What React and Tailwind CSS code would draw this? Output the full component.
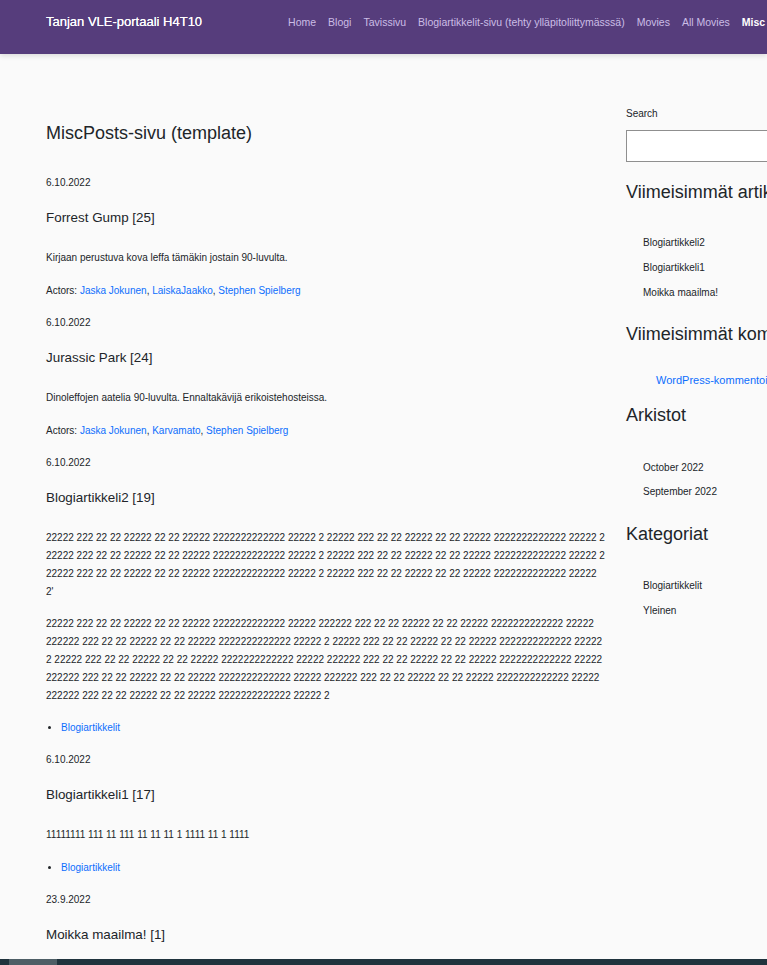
import React from "react";

const N = "2222222222222";
const A1 = `22222 222 22 22 22222 22 22 22222 ${N} 22222`;
const L1 = `${A1} 2 ${A1} 2`;
const L3 = `${A1} 2 ${A1}`;

const P2 = [
  `${A1} 2${A1}`,
  `2${A1} 2 ${A1}`,
  `2 ${A1} 2${A1}`,
  `2${A1} 2${A1}`,
  `2${A1} 2`,
];

function A({ children }) {
  return <a href="#" className="text-[#0d6efd]">{children}</a>;
}

function Post({ date, title, children }) {
  return (
    <article className="mb-[14px]">
      <p className="text-[10px] leading-[18px] mb-[18px]">{date}</p>
      <h2 className="text-[13.4px] leading-[16px] mb-[23px]">{title}</h2>
      <div className="flex flex-col gap-[15px] text-[10px] leading-[18px]">{children}</div>
    </article>
  );
}

function CatList({ className = "" }) {
  return (
    <ul className={`list-disc pl-[15px] text-[10px] leading-[18px] ${className}`}>
      <li><A>Blogiartikkelit</A></li>
    </ul>
  );
}

export default function App() {
  const nav = ["Home", "Blogi", "Tavissivu", "Blogiartikkelit-sivu (tehty ylläpitoliittymässsä)", "Movies", "All Movies"];
  return (
    <div className="w-[767px] min-h-screen overflow-hidden bg-[#fafafa] text-[#212529]" style={{ fontFamily: '"Liberation Sans", Arial, sans-serif' }}>
      <header className="h-[54px] bg-[#563d7c] shadow-[0_2px_5px_rgba(0,0,0,0.12)] flex items-start pt-[14px] pl-[46px] whitespace-nowrap relative z-10">
        <a href="#" className="text-white text-[13px] leading-[16px] shrink-0 [text-shadow:0_0_0.4px_#fff]">Tanjan VLE-portaali H4T10</a>
        <nav className="flex ml-[80px] shrink-0 text-[10.5px] leading-[16px]">
          {nav.map((n) => (
            <a key={n} href="#" className="px-[6px] text-[#cbbde6]">{n}</a>
          ))}
          <a href="#" className="px-[6px] text-white font-bold">Misc</a>
        </nav>
      </header>

      <div className="flex pl-[46px]">
        <main className="w-[559px] shrink-0 pt-[68px]">
          <h1 className="text-[18px] leading-[22px] mb-[30px]">MiscPosts-sivu (template)</h1>

          <Post date="6.10.2022" title="Forrest Gump [25]">
            <p>Kirjaan perustuva kova leffa tämäkin jostain 90-luvulta.</p>
            <p>Actors: <A>Jaska Jokunen</A>, <A>LaiskaJaakko</A>, <A>Stephen Spielberg</A></p>
          </Post>

          <Post date="6.10.2022" title="Jurassic Park [24]">
            <p>Dinoleffojen aatelia 90-luvulta. Ennaltakävijä erikoistehosteissa.</p>
            <p>Actors: <A>Jaska Jokunen</A>, <A>Karvamato</A>, <A>Stephen Spielberg</A></p>
          </Post>

          <Post date="6.10.2022" title="Blogiartikkeli2 [19]">
            <p className="whitespace-nowrap">
              {L1}<br />{L1}<br />{L3}<br />2'
            </p>
            <p className="whitespace-nowrap -mt-px">
              {P2.map((l, i) => (
                <React.Fragment key={i}>{l}{i < P2.length - 1 && <br />}</React.Fragment>
              ))}
            </p>
            <CatList className="-mt-px" />
          </Post>

          <Post date="6.10.2022" title="Blogiartikkeli1 [17]">
            <p>11111111 111 11 111 11 11 11 1 1111 11 1 1111</p>
            <CatList />
          </Post>

          <Post date="23.9.2022" title="Moikka maailma! [1]">
            <p>Tervetuloa WordPressiin. Tämä on ensimmäinen artikkelisi. Muokkaa tai poista se ja aloita bloggaaminen!</p>
            <CatList />
          </Post>
        </main>

        <aside className="w-[320px] shrink-0 ml-[21px] pt-[52px] whitespace-nowrap">
          <label className="block text-[10px] leading-[15px] mb-[8.5px]">Search</label>
          <div className="h-[32px] w-[300px] border border-[#8f8f8f] bg-white"></div>

          <h2 className="text-[18px] leading-[22px] mt-[19px]">Viimeisimmät artikkelit</h2>
          <ul className="pl-[17px] mt-[32.5px] text-[10px] leading-[15px] flex flex-col gap-[10px]">
            <li>Blogiartikkeli2</li>
            <li>Blogiartikkeli1</li>
            <li>Moikka maailma!</li>
          </ul>

          <h2 className="text-[18px] leading-[22px] mt-[22.5px]">Viimeisimmät kommentit</h2>
          <ul className="pl-[30px] mt-[27px] text-[11px] leading-[16px]">
            <li><A>WordPress-kommentoija</A> artikkelissa <A>Moikka maailma!</A></li>
          </ul>

          <h2 className="text-[18px] leading-[22px] mt-[16px]">Arkistot</h2>
          <ul className="pl-[17px] mt-[34.5px] text-[10px] leading-[15px] flex flex-col gap-[9px]">
            <li>October 2022</li>
            <li>September 2022</li>
          </ul>

          <h2 className="text-[18px] leading-[22px] mt-[23.5px]">Kategoriat</h2>
          <ul className="pl-[17px] mt-[33.5px] text-[10px] leading-[15px] flex flex-col gap-[10px]">
            <li>Blogiartikkelit</li>
            <li>Yleinen</li>
          </ul>
        </aside>
      </div>

      <div className="fixed bottom-0 left-0 w-full h-[6px] bg-[#20333d] z-20">
        <div className="absolute left-[9px] top-0 h-[6px] w-[48px] bg-[#4e5e66]"></div>
      </div>
    </div>
  );
}
